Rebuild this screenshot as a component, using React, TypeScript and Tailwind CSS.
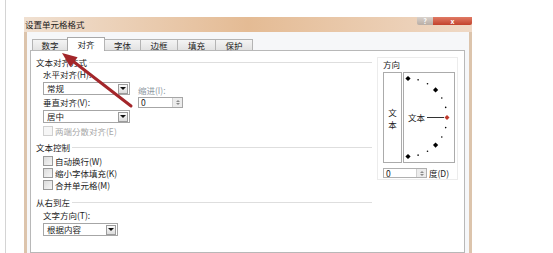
import React from "react";

const tabs = ["数字", "对齐", "字体", "边框", "填充", "保护"];
const tabWidths = ["w-[36px]", "w-[38px]", "w-[37px]", "w-[38px]", "w-[39px]", "w-[38px]"];

function DropButton() {
  return (
    <div className="ml-auto mr-px w-[10px] h-[10px] border border-[#9c9c9c] bg-gradient-to-b from-[#fbfbfb] to-[#dcdcdc] flex items-center justify-center">
      <div className="w-0 h-0 border-x-[3px] border-t-[3px] border-x-transparent border-t-[#111]" />
    </div>
  );
}

function Select({ value, width }: { value: string; width: string }) {
  return (
    <div className={`${width} h-[13px] border border-[#a6a6a6] bg-white flex items-center pl-[3px]`}>
      <span className="leading-[11px]">{value}</span>
      <DropButton />
    </div>
  );
}

function Spinner() {
  return (
    <div className="w-[10px] h-full border-l border-[#d0d0d0] bg-[#ececec] flex flex-col items-center justify-center gap-px">
      <div className="w-0 h-0 border-x-[2px] border-b-[2px] border-x-transparent border-b-[#8a8a8a]" />
      <div className="w-0 h-0 border-x-[2px] border-t-[2px] border-x-transparent border-t-[#8a8a8a]" />
    </div>
  );
}

function Check({ label, disabled }: { label: string; disabled?: boolean }) {
  return (
    <div className="h-[12px] flex items-center gap-[2px]">
      <div
        className={`w-[10px] h-[10px] border ${
          disabled ? "border-[#d0d0d0] bg-[#f6f6f6]" : "border-[#9a9a9a] bg-gradient-to-br from-[#dcdcdc] to-[#f6f6f6]"
        }`}
      />
      <span className={disabled ? "text-[#a8a8a8]" : ""}>{label}</span>
    </div>
  );
}

function GroupHeader({ title }: { title: string }) {
  return (
    <div className="h-[12px] flex items-center gap-[2px]">
      <span>{title}</span>
      <div className="flex-1 h-px bg-[#dedede]" />
    </div>
  );
}

function Dial() {
  const pts = [];
  for (let a = -90; a <= 90; a += 15) {
    const r = (a * Math.PI) / 180;
    const x = 4 + 39 * Math.cos(r);
    const y = 44.5 + 39 * Math.sin(r);
    if (a === 0) {
      pts.push(<polygon key={a} points={`${x},${y - 2.5} ${x + 2.5},${y} ${x},${y + 2.5} ${x - 2.5},${y}`} fill="#c0392b" />);
    } else if (a % 45 === 0) {
      pts.push(<polygon key={a} points={`${x},${y - 2.6} ${x + 2.6},${y} ${x},${y + 2.6} ${x - 2.6},${y}`} fill="#000" />);
    } else {
      pts.push(<circle key={a} cx={x} cy={y} r={0.8} fill="#000" />);
    }
  }
  return (
    <svg width="50" height="89" viewBox="0 0 50 89">
      {pts}
      <text x="4" y="47.5" fontSize="8.5" fontFamily="'Noto Sans CJK SC', sans-serif" fill="#222">
        文本
      </text>
      <line x1="23" y1="44.5" x2="40" y2="44.5" stroke="#333" strokeWidth="1" />
    </svg>
  );
}

export default function App() {
  return (
    <div className="relative w-[553px] h-[253px] bg-white overflow-hidden flex text-[8.5px] text-[#222] font-['Noto_Sans_CJK_SC',sans-serif]">
      <div className="ml-[5px] w-px h-full bg-[#d4d4d4]" />

      {/* dialog */}
      <div className="ml-[18px] mt-[17px] w-[448px] flex flex-col">
        {/* title bar */}
        <div className="h-[15px] flex items-start bg-gradient-to-r from-[#f0e0d1] via-[#e4bb94] to-[#efd9c6]">
          <span className="pl-px pt-[2px] leading-[11px] text-[#1a1a1a]">设置单元格格式</span>
          <div className="ml-auto flex h-[8px]">
            <div className="w-[16px] h-full bg-gradient-to-b from-[#d9d2cc] to-[#b8ada5] rounded-bl-[2px] flex items-center justify-center text-white text-[7px] leading-[8px] font-bold">
              ?
            </div>
            <div className="w-[39px] h-full bg-gradient-to-b from-[#e07a64] to-[#c2412c] rounded-br-[2px] flex items-center justify-center text-white text-[7px] leading-[8px] font-bold">
              x
            </div>
          </div>
        </div>

        {/* body */}
        <div className="flex-1 border-x-[3px] border-[#dcc4ac] bg-[#f6f7f9] pl-[3px] pr-[4px] pt-[5px] flex flex-col">
          {/* tabs */}
          <div className="h-[13px] pl-[2px] flex items-end relative z-10">
            {tabs.map((t, i) =>
              i === 1 ? (
                <div
                  key={t}
                  className={`${tabWidths[i]} -ml-px h-[14px] -mb-px border border-b-0 border-[#a8a8a8] bg-white flex items-center justify-center`}
                >
                  {t}
                </div>
              ) : (
                <div
                  key={t}
                  className={`${tabWidths[i]} ${i === 0 ? "" : "-ml-px"} h-[11px] border border-b-0 border-[#b4b4b4] bg-gradient-to-b from-[#f4f4f4] to-[#e2e2e2] flex items-center justify-center`}
                >
                  {t}
                </div>
              )
            )}
          </div>

          {/* pane */}
          <div className="flex-1 border border-[#b8b8b8] bg-white pl-[5px] flex">
            {/* left column */}
            <div className="w-[336px] flex flex-col pt-[5px]">
              <GroupHeader title="文本对齐方式" />
              <div className="pl-[7px] flex">
                <div className="w-[87px] flex flex-col">
                  <div className="h-[12px] flex items-center">水平对齐(H):</div>
                  <div className="mt-[2px]">
                    <Select value="常规" width="w-[87px]" />
                  </div>
                  <div className="mt-px h-[12px] flex items-center">垂直对齐(V):</div>
                  <div className="mt-[2px]">
                    <Select value="居中" width="w-[87px]" />
                  </div>
                </div>
                <div className="ml-[8px] flex flex-col pt-[16px]">
                  <div className="h-[12px] flex items-center text-[#8e98a2]">缩进(I):</div>
                  <div className="mt-px w-[45px] h-[11px] border border-[#a6a6a6] flex">
                    <span className="pl-[2px] flex-1 leading-[9px]">0</span>
                    <Spinner />
                  </div>
                </div>
              </div>
              <div className="pl-[7px] mt-[2px]">
                <Check label="两端分散对齐(E)" disabled />
              </div>

              <div className="mt-[4px]">
                <GroupHeader title="文本控制" />
              </div>
              <div className="pl-[7px] mt-[2px] flex flex-col">
                <Check label="自动换行(W)" />
                <Check label="缩小字体填充(K)" />
                <Check label="合并单元格(M)" />
              </div>

              <div className="mt-[5px]">
                <GroupHeader title="从右到左" />
              </div>
              <div className="pl-[7px] mt-px flex flex-col">
                <div className="h-[12px] flex items-center">文字方向(T):</div>
                <div className="mt-[2px]">
                  <Select value="根据内容" width="w-[75px]" />
                </div>
              </div>
            </div>

            {/* right column: orientation */}
            <div className="ml-[5px] mt-[6px] w-[81px] h-[123px] border border-[#ececec] pl-[5px] flex flex-col">
              <div className="h-[12px] flex items-center">方向</div>
              <div className="mt-[2px] flex">
                <div className="w-[19px] h-[91px] border border-[#ababab] flex flex-col items-center justify-center">
                  <span className="leading-[12px]">文</span>
                  <span className="leading-[12px]">本</span>
                </div>
                <div className="ml-px w-[52px] h-[91px] border border-[#ababab]">
                  <Dial />
                </div>
              </div>
              <div className="mt-[5px] h-[10px] flex items-center">
                <div className="w-[44px] h-[10px] border border-[#b0b0b0] flex">
                  <span className="pl-[2px] flex-1 leading-[8px]">0</span>
                  <Spinner />
                </div>
                <span className="ml-[2px]">度(D)</span>
              </div>
            </div>
          </div>
        </div>
      </div>

      {/* red annotation arrow */}
      <svg className="absolute inset-0 pointer-events-none" width="553" height="253" viewBox="0 0 553 253">
        <line x1="131" y1="106" x2="74" y2="62" stroke="#a3262a" strokeWidth="3" strokeLinecap="round" />
        <polygon points="62,53 77.6,57.3 70.3,66.9" fill="#a3262a" />
      </svg>
    </div>
  );
}
